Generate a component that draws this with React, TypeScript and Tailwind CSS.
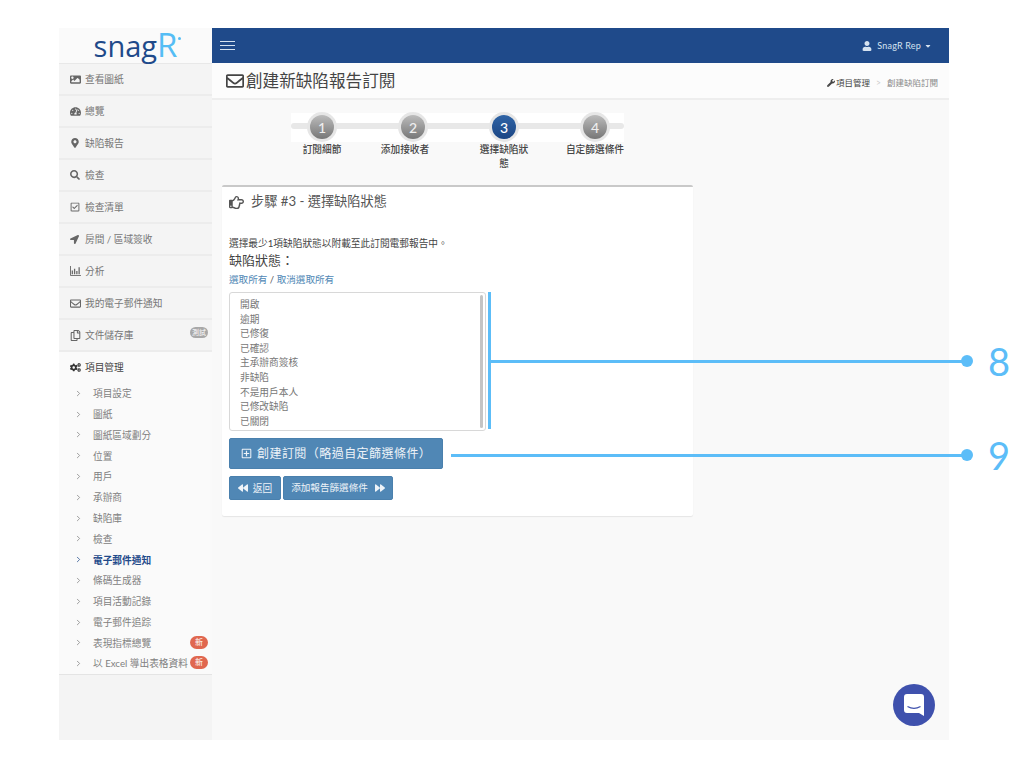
import React from 'react';
import {
  FaImage,
  FaTachometerAlt,
  FaMapMarkerAlt,
  FaSearch,
  FaRegCheckSquare,
  FaLocationArrow,
  FaRegEnvelope,
  FaRegCopy,
  FaCogs,
  FaWrench,
  FaUser,
  FaRegHandPointRight,
  FaBackward,
  FaForward,
  FaRegPlusSquare,
  FaCaretDown,
} from 'react-icons/fa';
import { ChevronRight } from 'lucide-react';

const BarChartIcon = () => (
  <svg width="11" height="10" viewBox="0 0 12 11" fill="none">
    <path d="M0.5 0v10.5H12" stroke="currentColor" />
    <path d="M2.5 5v4M5 3v6M7.5 5.5V9M10 1.5V9" stroke="currentColor" strokeWidth="1.4" />
  </svg>
);

const mainNav = [
  { icon: <FaImage size={11} />, label: '查看圖紙' },
  { icon: <FaTachometerAlt size={11} />, label: '總覽' },
  { icon: <FaMapMarkerAlt size={10} />, label: '缺陷報告' },
  { icon: <FaSearch size={10} />, label: '檢查' },
  { icon: <FaRegCheckSquare size={10} />, label: '檢查清單' },
  { icon: <FaLocationArrow size={9} />, label: '房間 / 區域簽收' },
  { icon: <BarChartIcon />, label: '分析' },
  { icon: <FaRegEnvelope size={11} />, label: '我的電子郵件通知' },
  { icon: <FaRegCopy size={11} />, label: '文件儲存庫', beta: true },
];

const subNav = [
  { label: '項目設定' },
  { label: '圖紙' },
  { label: '圖紙區域劃分' },
  { label: '位置' },
  { label: '用戶' },
  { label: '承辦商' },
  { label: '缺陷庫' },
  { label: '檢查' },
  { label: '電子郵件通知', active: true },
  { label: '條碼生成器' },
  { label: '項目活動記錄' },
  { label: '電子郵件追踪' },
  { label: '表現指標總覽', isNew: true },
  { label: '以 Excel 導出表格資料', isNew: true },
];

const steps = [
  { n: 1, label: '訂閱細節' },
  { n: 2, label: '添加接收者', shift: '-ml-[16px]' },
  { n: 3, label: '選擇缺陷狀', label2: '態', current: true },
  { n: 4, label: '自定篩選條件' },
];

const statuses = ['開啟', '逾期', '已修復', '已確認', '主承辦商簽核', '非缺陷', '不是用戶本人', '已修改缺陷', '已關閉'];

const Sidebar = () => (
  <aside className="w-[153px] shrink-0 bg-[#f4f4f4] flex flex-col">
    <div className="h-[35px] bg-[#fafafa] border-b border-[#e8e8e8] flex items-center justify-center box-content">
      <span className="text-[29px] leading-none text-[#1f4a8a] font-medium relative -top-[1px] font-['Open_Sans',sans-serif]">
        snag<span className="text-[33px] text-[#55bdf5]">R</span>
        <span className="absolute right-[-4px] top-[9px] w-[3px] h-[3px] rounded-full bg-[#55bdf5]"></span>
      </span>
    </div>
    {mainNav.map((item) => (
      <div key={item.label} className="h-[32px] border-b-2 border-[#ececec] flex items-center pl-[11px] text-[9.7px] text-[#777] relative">
        <span className="w-[15px] flex justify-start text-[#666]">{item.icon}</span>
        <span>{item.label}</span>
        {item.beta && (
          <span className="absolute right-[4px] top-[7px] h-[11px] w-[18px] rounded-full bg-[#a8a8a8] text-white text-[7px] leading-[11px] text-center">測試</span>
        )}
      </div>
    ))}
    <div className="bg-[#fafafa] border-b border-[#e4e4e4] h-[323px]">
      <div className="h-[31px] flex items-center pl-[11px] text-[9.7px] text-[#444]">
        <span className="w-[15px] text-[#333]"><FaCogs size={11} /></span>
        <span>項目管理</span>
      </div>
      <div className="flex flex-col">
        {subNav.map((item) => (
          <div key={item.label} className={`h-[20.8px] flex items-center pl-[15px] text-[9.7px] relative ${item.active ? 'text-[#1f4a8a] font-bold' : 'text-[#808080]'}`}>
            <span className="w-[19px]"><ChevronRight size={9} strokeWidth={2} /></span>
            <span className="whitespace-nowrap">{item.label}</span>
            {item.isNew && (
              <span className="absolute right-[4px] top-[3px] h-[13px] w-[18px] rounded-full bg-[#e0674f] text-white text-[8px] leading-[13px] text-center">新</span>
            )}
          </div>
        ))}
      </div>
    </div>
  </aside>
);

const StepBar = () => (
  <div className="ml-[64.5px] mt-[12px] w-[364px] relative">
    <div className="absolute left-[14.5px] top-[1px] w-[333px] h-[29px] bg-white">
      <div className="absolute left-0 right-0 top-[10px] h-[6px] rounded-full bg-[#e8e8e8]"></div>
    </div>
    <div className="relative flex">
      {steps.map((s) => (
        <div key={s.n} className="w-[91px] flex flex-col items-center">
          <div className="w-[30px] h-[30px] rounded-full p-[3px] bg-[#e6e6e6]">
            <div className={`w-full h-full rounded-full flex items-center justify-center text-[14px] font-medium ${s.current ? 'bg-gradient-to-b from-[#2f64a6] to-[#1c4684] text-white' : 'bg-gradient-to-b from-[#bcbcbc] to-[#777] text-[#eee]'}`}>
              {s.n}
            </div>
          </div>
          <div className={`text-[9.7px] leading-[14px] text-[#444] text-center font-medium whitespace-nowrap ${s.shift ?? ''}`}>
            {s.label}
            {s.label2 && <div>{s.label2}</div>}
          </div>
        </div>
      ))}
    </div>
  </div>
);

const Panel = () => (
  <div className="ml-[10px] mt-[15px] w-[471px] h-[331px] bg-white border-t-2 border-[#c9c9c9] rounded-[2px] shadow-[0_1px_1px_rgba(0,0,0,0.08)] px-[7px]">
    <div className="h-[28px] pt-[2px] flex items-center text-[#555]">
      <FaRegHandPointRight size={15} />
      <span className="ml-[7px] text-[13.2px]">步驟 #3 - 選擇缺陷狀態</span>
    </div>
    <p className="mt-[21px] h-[14px] leading-[14px] text-[9.7px] text-[#444]">選擇最少1項缺陷狀態以附載至此訂閱電郵報告中。</p>
    <div className="h-[20px] leading-[20px] text-[13px] text-[#444]">缺陷狀態：</div>
    <div className="mt-[2px] h-[16px] leading-[16px] text-[9.6px] text-[#4f87b5]">
      選取所有 <span className="text-[#555]">/</span> 取消選取所有
    </div>
    <div className="mt-[4px] w-[257px] h-[139px] border border-[#d8d8d8] rounded-[3px] pl-[10px] pt-[4px] relative">
      {statuses.map((s) => (
        <div key={s} className="h-[14.6px] leading-[14.6px] text-[9.7px] text-[#777]">{s}</div>
      ))}
      <div className="absolute right-[2px] top-[2px] bottom-[2px] w-[3px] bg-[#c4c4c4] rounded-full"></div>
    </div>
    <button className="mt-[7px] w-[214px] h-[31px] bg-[#5087b5] border border-[#4a80ad] rounded-[2px] text-[#eef3f8] text-[12px] flex items-center pl-[11px] tracking-[0.45px]">
      <FaRegPlusSquare size={11} />
      <span className="ml-[5px] whitespace-nowrap">創建訂閱（略過自定篩選條件）</span>
    </button>
    <div className="mt-[7px] flex gap-[2px]">
      <button className="w-[52px] h-[24px] bg-[#5087b5] border border-[#4a80ad] rounded-[2px] text-[#eef3f8] text-[9.7px] flex items-center justify-center gap-[5px]">
        <FaBackward size={10} />
        返回
      </button>
      <button className="w-[110px] h-[24px] bg-[#5087b5] border border-[#4a80ad] rounded-[2px] text-[#eef3f8] text-[9.6px] flex items-center justify-center gap-[7px]">
        添加報告篩選條件
        <FaForward size={10} />
      </button>
    </div>
  </div>
);

export default function App() {
  return (
    <div className="w-[1024px] h-[768px] bg-white pt-[28px] pl-[59px] relative overflow-hidden font-['Lato','Noto_Sans_CJK_TC',sans-serif]">
      <div className="w-[890px] h-[712px] flex bg-[#f9f9f9]">
        <Sidebar />
        <div className="flex-1 flex flex-col">
          <header className="h-[35px] bg-[#1f4a8a] flex items-center justify-between pl-[8px] pr-[17px] text-white">
            <div className="flex flex-col gap-[3px]">
              <span className="block w-[15px] h-[1px] bg-[#d5e2f0]"></span>
              <span className="block w-[15px] h-[1px] bg-[#d5e2f0]"></span>
              <span className="block w-[15px] h-[1px] bg-[#d5e2f0]"></span>
            </div>
            <div className="flex items-center text-[9px] text-[#d5e2f0]">
              <FaUser size={10} />
              <span className="ml-[5px] tracking-[0.2px]">SnagR Rep</span>
              <FaCaretDown size={8} className="ml-[3px]" />
            </div>
          </header>
          <div className="h-[37px] bg-[#fcfcfc] border-b-2 border-[#eeeeee] flex items-center justify-between pl-[14px] pr-[11px]">
            <div className="flex items-center text-[16.6px] text-[#444] mt-[2px]">
              <FaRegEnvelope size={18} />
              <span className="ml-[2px]">創建新缺陷報告訂閱</span>
            </div>
            <div className="flex items-center text-[8.5px] text-[#444] mt-[5px]">
              <FaWrench size={8} />
              <span className="ml-[1px]">項目管理</span>
              <span className="mx-[6px] text-[#ccc]">&gt;</span>
              <span className="text-[#888]">創建缺陷訂閱</span>
            </div>
          </div>
          <StepBar />
          <Panel />
        </div>
      </div>

      {/* callouts */}
      <div className="absolute left-[488px] top-[292px] w-[3px] h-[137px] bg-[#5cbdf8]"></div>
      <div className="absolute left-[491px] top-[360px] w-[476px] h-[3px] bg-[#5cbdf8]"></div>
      <div className="absolute left-[961px] top-[355px] w-[12px] h-[12px] rounded-full bg-[#5cbdf8]"></div>
      <div className="absolute left-[988px] top-[339px] text-[38px] leading-[44px] text-[#5cbdf8]">8</div>
      <div className="absolute left-[451px] top-[454px] w-[516px] h-[3px] bg-[#5cbdf8]"></div>
      <div className="absolute left-[961px] top-[449px] w-[12px] h-[12px] rounded-full bg-[#5cbdf8]"></div>
      <div className="absolute left-[988px] top-[433px] text-[38px] leading-[44px] text-[#5cbdf8]">9</div>

      {/* chat launcher */}
      <div className="absolute left-[893px] top-[684px] w-[42px] h-[42px] rounded-full bg-[#3f51ad] flex items-center justify-center">
        <svg width="20" height="22" viewBox="0 0 20 22">
          <path d="M3 0h14a3 3 0 0 1 3 3v19l-5-3H3a3 3 0 0 1-3-3V3a3 3 0 0 1 3-3z" fill="#fff" />
          <path d="M3.5 12.5c4 2.2 9 2.2 13 0" stroke="#3f51ad" strokeWidth="1.2" fill="none" />
        </svg>
      </div>
    </div>
  );
}
